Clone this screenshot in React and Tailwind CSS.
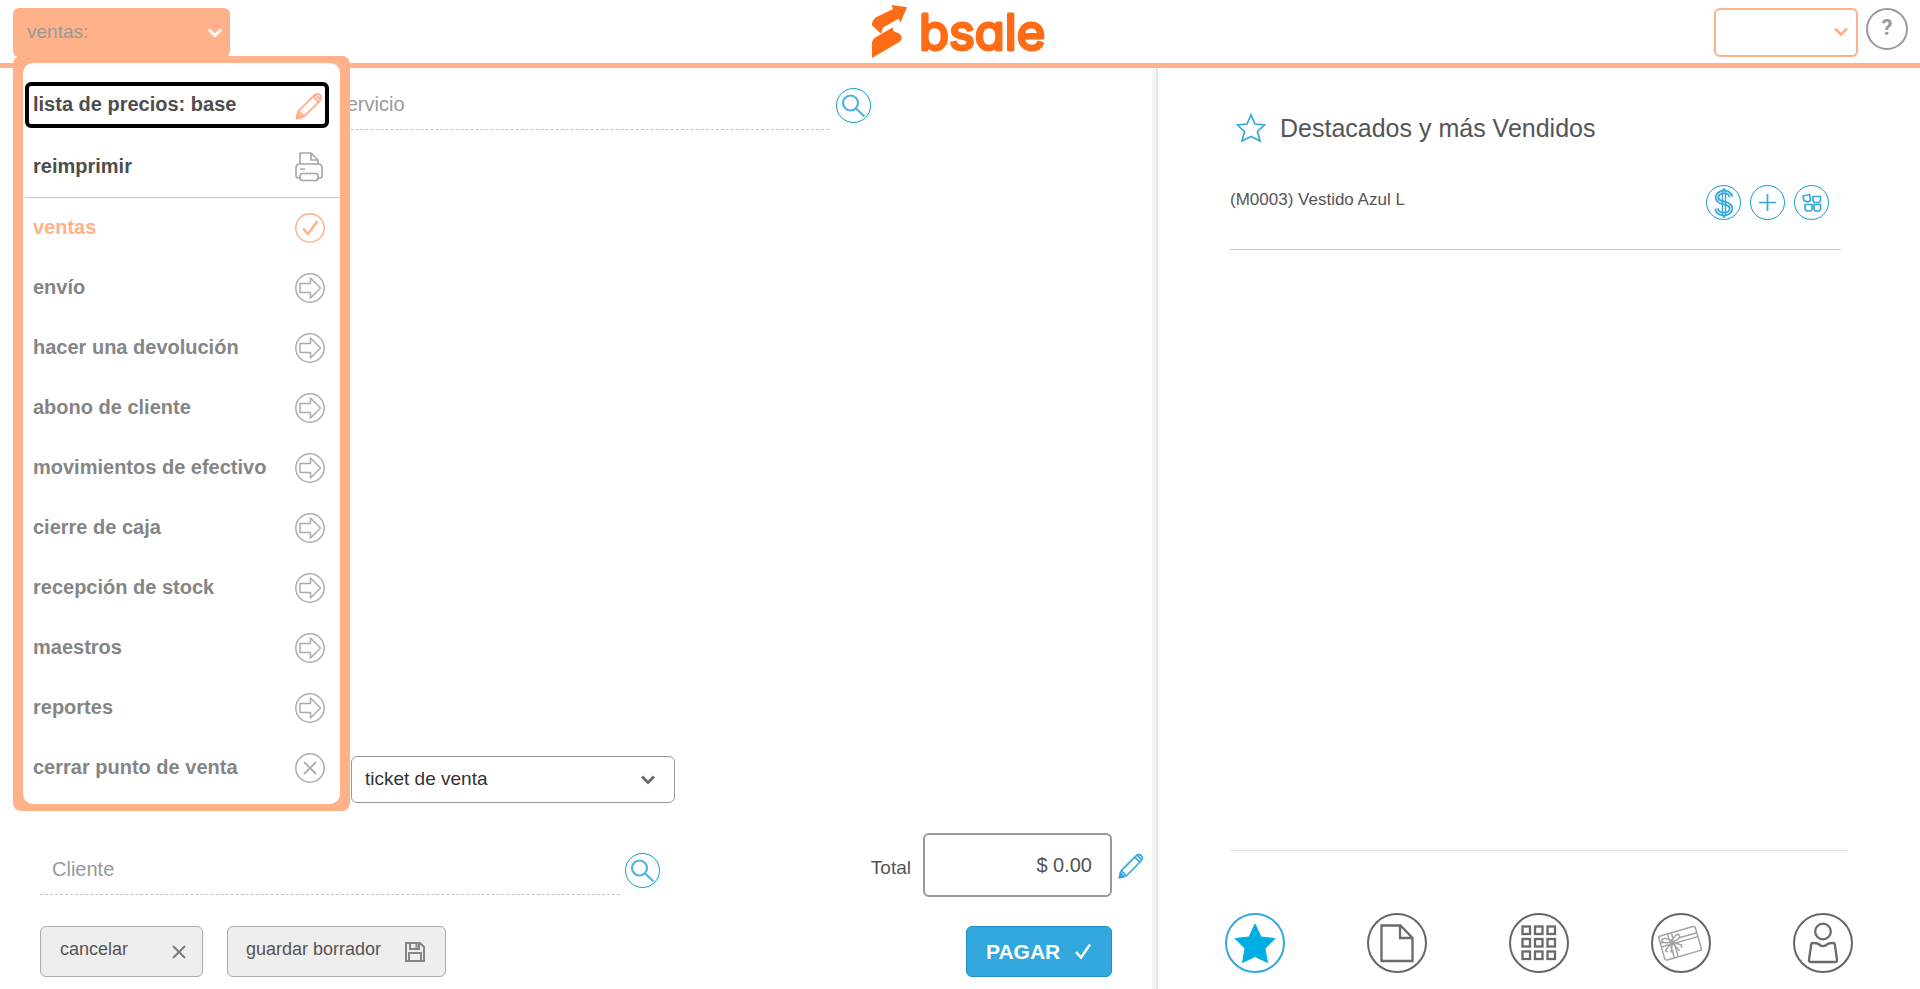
import { useState } from "react";
import clsx from "clsx";

const menuItems = [
  { id: "ventas", label: "ventas", icon: "check" },
  { id: "envio", label: "envío", icon: "arrow" },
  { id: "devolucion", label: "hacer una devolución", icon: "arrow" },
  { id: "abono", label: "abono de cliente", icon: "arrow" },
  { id: "movimientos", label: "movimientos de efectivo", icon: "arrow" },
  { id: "cierre", label: "cierre de caja", icon: "arrow" },
  { id: "recepcion", label: "recepción de stock", icon: "arrow" },
  { id: "maestros", label: "maestros", icon: "arrow" },
  { id: "reportes", label: "reportes", icon: "arrow" },
  { id: "cerrar", label: "cerrar punto de venta", icon: "close" },
];

const products = [{ code: "M0003", name: "Vestido Azul L" }];

function Logo() {
  return (
    <svg width="178" height="63" viewBox="0 0 178 63" role="img" aria-label="bsale" className="overflow-visible">
      <g fill="#ff6c17">
        <path d="M20.500 5l15.500 2.300-6.500 15.200-2-3.800L12 27.500l-2 6.200L1 25.500C.6 22 2.500 19 5.500 17L22 9z" />
        <path d="M1 58V43c0-3 2-5 5-6.500l16-9.300c-.5 3 .5 4.300 4 5.300 6 2.500 6 7.500 1.500 10z" />
      </g>
      <text
        x="48"
        y="50"
        fontFamily="Inter, sans-serif"
        fontSize="49"
        fontWeight="400"
        fill="#ff6c17"
        stroke="#ff6c17"
        strokeWidth="3"
        strokeLinejoin="round"
        className="[font-feature-settings:'cv11']"
      >
        bsale
      </text>
    </svg>
  );
}

function Chevron({ className }) {
  return (
    <svg width="14" height="10" viewBox="0 0 14 10" fill="none" stroke="currentColor" strokeWidth="3" className={className}>
      <path d="M1 1.500l6 6 6-6" />
    </svg>
  );
}

function PencilIcon({ size = 30, className }) {
  return (
    <svg width={size} height={size} viewBox="0 0 30 30" fill="none" stroke="currentColor" strokeWidth="1.800" strokeLinejoin="round" className={className}>
      <path d="M1.500 28.500l2-7.500L19 5.500c2-2 4.500-2 6-.5s1.500 4-.5 6L9 26.500z" />
      <path d="M3.500 21l5.500 5.500M18 6.500l5.500 5.500M20.500 4.500l5 5" />
      <path d="M1.500 28.500l1-5 4 4z" fill="currentColor" />
    </svg>
  );
}

function PrinterIcon() {
  return (
    <svg width="30" height="30" viewBox="0 0 30 30" fill="none" stroke="#a5a5a5" strokeWidth="1.600" strokeLinejoin="round">
      <path d="M6 12V1h11l7 7v4M17 1v7h7" />
      <path d="M6 26H4.500c-1.500 0-2.500-.7-2.500-2v-8c0-2.500 1.200-4 3.500-4h19c2.300 0 3.500 1.500 3.500 4v8c0 1.300-1 2-2.500 2H24M6 17h5" />
      <rect x="6" y="21.500" width="18" height="7" rx="2.500" />
    </svg>
  );
}

function MenuIcon({ type }) {
  return (
    <svg width="30" height="30" viewBox="0 0 30 30" fill="none" stroke="currentColor" strokeWidth="1.500">
      <circle cx="15" cy="15" r="14.200" />
      {type === "check" && <path d="M8 15.500l5 5.500 9.500-13" strokeWidth="2.600" />}
      {type === "arrow" && <path d="M5 10.500h10.500V5L25.500 15l-10 10v-5.500H5z" strokeLinejoin="round" />}
      {type === "close" && <path d="M9 9l12 12M21 9L9 21" strokeWidth="1.800" />}
    </svg>
  );
}

function SearchIcon() {
  return (
    <svg width="33" height="33" viewBox="0 0 33 33" fill="none" stroke="#4db4df" strokeWidth="2.200">
      <circle cx="13.500" cy="14" r="7.500" />
      <path d="M18.500 19l9 8.500" />
    </svg>
  );
}

function RoundButton({ label, children }) {
  return (
    <button
      aria-label={label}
      className="w-[35px] h-[35px] shrink-0 rounded-full border border-[#0f9bd0] text-[#35a9dc] flex items-center justify-center"
    >
      {children}
    </button>
  );
}

function TabIcon({ type }) {
  if (type === "star") {
    return (
      <svg width="56" height="56" viewBox="0 0 56 56" fill="#00aee4" stroke="#00aee4" strokeLinejoin="round">
        <path d="M28 9l6 13 14 1.500-10 10 2.500 14L28 41.500 15.500 47.500l2.500-14-10-10L22 22z" />
      </svg>
    );
  }
  return (
    <svg width="56" height="56" viewBox="0 0 56 56" fill="none" stroke="#6a6a6a" strokeWidth="2.300">
      {type === "doc" && <path d="M12.500 10.500h19l12 12.500v23h-31zM31 10.500V23h12.500" />}
      {type === "grid" &&
        [11.500, 24, 36.500].map((y) =>
          [11.500, 24, 36.500].map((x) => (
            <rect key={`${x}-${y}`} x={x} y={y} width="7.500" height="7.500" />
          ))
        )}
      {type === "gift" && (
        <g stroke="#a3a3a3" strokeWidth="1.500" strokeLinejoin="round" transform="rotate(-16 28 28)">
          <rect x="8" y="15.500" width="38" height="25" rx="2" />
          <path d="M8 22.500h38M8 26.500h38M17.500 15.500v25M21.500 15.500v25" />
          <path
            d="M19.500 24c-3-5-8-6-9-4s3 5 9 4c6 1 10-2 9-4s-6-1-9 4zM19 25l-8 6 1.500 2M20 25l-4 9 3-1.500M20 25l8 5-1 3M19.500 25l5 10"
            fill="white"
          />
        </g>
      )}
      {type === "person" && (
        <g strokeLinejoin="round">
          <circle cx="28" cy="16.500" r="7.800" />
          <path d="M18 28c3 0 4.500 0 6 1.500 3 2.500 5 2.500 8 0 1.500-1.500 3-1.500 6-1.500 1.500 0 2 1 2 2.500l2 14.500c0 1.500-.5 2-2 2H16c-1.500 0-2-.5-2-2l2-14.500c0-1.500.5-2.500 2-2.500z" />
        </g>
      )}
    </svg>
  );
}

const tabs = [
  { id: "star", label: "Destacados" },
  { id: "doc", label: "Documentos" },
  { id: "grid", label: "Categorías" },
  { id: "gift", label: "Gift card" },
  { id: "person", label: "Clientes" },
];

function MainMenu({ active, onSelect }) {
  const row = "w-full flex items-center justify-between border-4 rounded-md pl-1 text-left";
  return (
    <div className="absolute z-10 left-0 top-12 w-[337px] bg-[#ffb18a] rounded-lg px-[10px] py-[7px]">
      <ul className="bg-white rounded-[10px] pt-[19px] pb-[6px] pl-[2px] text-xl font-bold">
        <li className="pr-[11px] mb-[9px]">
          <button className={clsx(row, "h-[46px] border-black text-[#4d4d4d]")}>
            <span className="pb-[2px]">lista de precios: base</span>
            <PencilIcon className="text-[#ffb18a]" />
          </button>
        </li>
        <li className="pr-[11px] mr-px border-b border-[#c4c9c6]">
          <button className={clsx(row, "h-15 border-transparent text-[#4d4d4d]")}>
            <span className="pb-[2px]">reimprimir</span>
            <PrinterIcon />
          </button>
        </li>
        {menuItems.map((item) => (
          <li key={item.id} className="pr-[11px]">
            <button
              onClick={() => onSelect(item.id)}
              className={clsx(
                row,
                "h-15 border-transparent",
                active === item.id ? "text-[#ffb18a]" : "text-[#858585]"
              )}
            >
              <span className="pb-[2px]">{item.label}</span>
              <span className={active === item.id ? "text-[#ffb18a]" : "text-[#adadad]"}>
                <MenuIcon type={item.icon} />
              </span>
            </button>
          </li>
        ))}
      </ul>
    </div>
  );
}

export default function App() {
  const [open, setOpen] = useState(true);
  const [active, setActive] = useState("ventas");
  const [tab, setTab] = useState("star");

  return (
    <div className="min-h-screen flex flex-col bg-white text-[#555] font-['Liberation_Sans',Arial,sans-serif]">
      {/* Header */}
      <header className="h-[68px] border-b-[5px] border-[#ffb18a] px-3 grid grid-cols-[1fr_auto_1fr]">
        <div className="relative w-[217px] mt-2 ml-px">
          <button
            aria-expanded={open}
            onClick={() => setOpen(!open)}
            className="w-full h-[49px] rounded-md bg-[#ffb18a] pl-[14px] pr-2 flex items-center justify-between text-[19px] text-[#999]"
          >
            ventas:
            <Chevron className="text-white" />
          </button>
          {open && <MainMenu active={active} onSelect={setActive} />}
        </div>
        <Logo />
        <div className="flex justify-end gap-2 pt-2">
          <div className="relative">
            <select
              aria-label="Usuario"
              className="appearance-none w-36 h-[49px] rounded-md border-2 border-[#ffb18a] bg-white px-3"
            />
            <Chevron className="absolute right-[10px] top-[19px] text-[#ffb18a] pointer-events-none" />
          </div>
          <button
            aria-label="Ayuda"
            className="size-[42px] rounded-full border-2 border-[#999] text-[#999] text-[22px] pb-[2px] font-bold font-[Roboto,sans-serif] leading-none"
          >
            ?
          </button>
        </div>
      </header>

      <main className="flex-1 flex">
        {/* Venta */}
        <section className="w-3/5 pl-10 pr-[6px] pt-5 pb-3 flex flex-col">
          <div className="flex items-start gap-[7px] pr-[275px]">
            <input
              type="text"
              aria-label="Producto o servicio"
              placeholder="Buscar y agregar un producto o servicio"
              className="flex-1 min-w-0 h-[42px] pl-[11px] pb-2 text-xl border-b border-dashed border-[#c4c4c4] placeholder:text-[#999] outline-none"
            />
            <RoundButton label="Buscar producto">
              <SearchIcon />
            </RoundButton>
          </div>

          <div className="mt-auto w-[635px] flex justify-end">
            <div className="relative">
              <select
                aria-label="Tipo de documento"
                className="appearance-none w-[324px] h-[47px] rounded-md border border-[#999] bg-white pl-[13px] text-[19px] text-[#333]"
              >
                <option>ticket de venta</option>
              </select>
              <Chevron className="absolute right-5 top-[19px] text-[#6b6b6b] pointer-events-none" />
            </div>
          </div>

          <div className="mt-[30px] flex items-center justify-between">
            <div className="flex items-start gap-[5px] pt-[18px]">
              <input
                type="text"
                aria-label="Cliente"
                placeholder="Cliente"
                className="w-[580px] h-[42px] pl-3 pb-2 text-xl border-b border-dashed border-[#c4c4c4] placeholder:text-[#999] outline-none"
              />
              <RoundButton label="Buscar cliente">
                <SearchIcon />
              </RoundButton>
            </div>
            <div className="flex items-center gap-3">
              <label htmlFor="total" className="text-[19px] pt-[6px]">
                Total
              </label>
              <input
                id="total"
                readOnly
                value="$ 0.00"
                className="w-[189px] h-16 rounded-md border-2 border-[#999] pr-[18px] text-right text-xl outline-none"
              />
              <button aria-label="Editar total" className="-ml-[6px] text-[#35a9dc]">
                <PencilIcon size={28} />
              </button>
            </div>
          </div>

          <div className="mt-[29px] flex items-center pr-[34px]">
            <button className="w-[163px] h-[51px] rounded-md border border-[#aaa] bg-[#eee] pl-[19px] pr-4 flex items-center justify-between text-lg">
              <span className="pb-[6px]">cancelar</span>
              <svg width="14" height="14" viewBox="0 0 14 14" stroke="#777" strokeWidth="1.800">
                <path d="M1 1l12 12M13 1L1 13" />
              </svg>
            </button>
            <button className="ml-6 w-[219px] h-[51px] rounded-md border border-[#aaa] bg-[#eee] pl-[18px] pr-5 flex items-center justify-between text-lg">
              <span className="pb-[6px]">guardar borrador</span>
              <svg width="20" height="20" viewBox="0 0 20 20" fill="none" stroke="#858585" strokeWidth="2">
                <path d="M1 1h14l4 4v14H1zM5 1v6h9V1M4 19v-8h12v8M11.500 2v4" />
              </svg>
            </button>
            <button className="ml-auto w-[146px] h-[51px] rounded-md border border-[#1f8fc4] bg-[#32a8de] pl-[19px] pr-5 flex items-center justify-between text-[21px] font-bold text-white">
              PAGAR
              <svg width="16" height="17" viewBox="0 0 16 17" fill="none" stroke="white" strokeWidth="2.400">
                <path d="M1 9l5 5.500L15 1.500" />
              </svg>
            </button>
          </div>
        </section>

        <div className="w-[6px] bg-[#f5f6f8] border-r-2 border-[#e3e4e7]" />

        {/* Destacados */}
        <section className="flex-1 flex flex-col pb-4">
          <div className="pl-18 pr-[79px] pt-11">
            <h1 className="pl-[6px] flex items-center gap-[14px] text-[25px] leading-8">
              <svg width="30" height="30" viewBox="0 0 30 30" fill="none" stroke="#35a9dc" strokeWidth="1.700">
                <path d="M15 2l4 9 9.500 1-7 6.500 2.500 9.500-9-4.500L6 28l2.500-9.500-7-6.500L11 11z" />
              </svg>
              Destacados y más Vendidos
            </h1>
            <ul>
              {products.map((p) => (
                <li
                  key={p.code}
                  className="mt-[41px] pr-3 h-[65px] flex items-start justify-between border-b border-[#c8c8c8]"
                >
                  <span className="pt-[2px] text-[17px]">
                    ({p.code}) {p.name}
                  </span>
                  <div className="flex gap-[9px]">
                    <RoundButton label="Ver precio">
                      <svg width="20" height="30" viewBox="0 0 20 30" fill="none" stroke="currentColor">
                        <path d="M17 9c-1-4-4-5-7-5S3 6 3 9.500s3 4.500 7 5.500 7 2 7 5.500-3 5.500-7 5.500-7-1.500-7.500-5.500" strokeWidth="4.500" />
                        <path d="M17 9c-1-4-4-5-7-5S3 6 3 9.500s3 4.500 7 5.500 7 2 7 5.500-3 5.500-7 5.500-7-1.500-7.500-5.500" stroke="white" strokeWidth="1" />
                        <path d="M8.500 2v26M11.500 2v26M8.500 2L10 .8 11.500 2M8.500 28l1.500 1.200 1.500-1.200" strokeWidth="1.400" />
                      </svg>
                    </RoundButton>
                    <RoundButton label="Agregar">
                      <svg width="17" height="17" viewBox="0 0 17 17" stroke="currentColor" strokeWidth="1.700">
                        <path d="M8.500 0v17M0 8.500h17" />
                      </svg>
                    </RoundButton>
                    <RoundButton label="Variantes">
                      <svg width="20" height="20" viewBox="0 0 20 20" fill="none" stroke="currentColor" strokeWidth="1.700" strokeLinejoin="round">
                        <path d="M1 3L7.500 1.500l1 6L5.500 9 2 7.500zM11 3.500h7.500v4l-1.500 2h-5l-1-2zM3 11.500h7v5L8.500 18h-4L3 16.500zM12 11.500h6.500v5L17 18h-3.500L12 16.500z" />
                      </svg>
                    </RoundButton>
                  </div>
                </li>
              ))}
            </ul>
          </div>

          <nav className="mt-auto">
            <hr className="mx-18 border-[#e2e2e2]" />
            <div className="mt-[62px] px-[67px] flex justify-between">
              {tabs.map((t) => (
                <button
                  key={t.id}
                  aria-label={t.label}
                  onClick={() => setTab(t.id)}
                  className={clsx(
                    "size-15 rounded-full border-2",
                    tab === t.id ? "border-[#32a8de]" : "border-[#666]"
                  )}
                >
                  <TabIcon type={t.id} />
                </button>
              ))}
            </div>
          </nav>
        </section>
      </main>
    </div>
  );
}
